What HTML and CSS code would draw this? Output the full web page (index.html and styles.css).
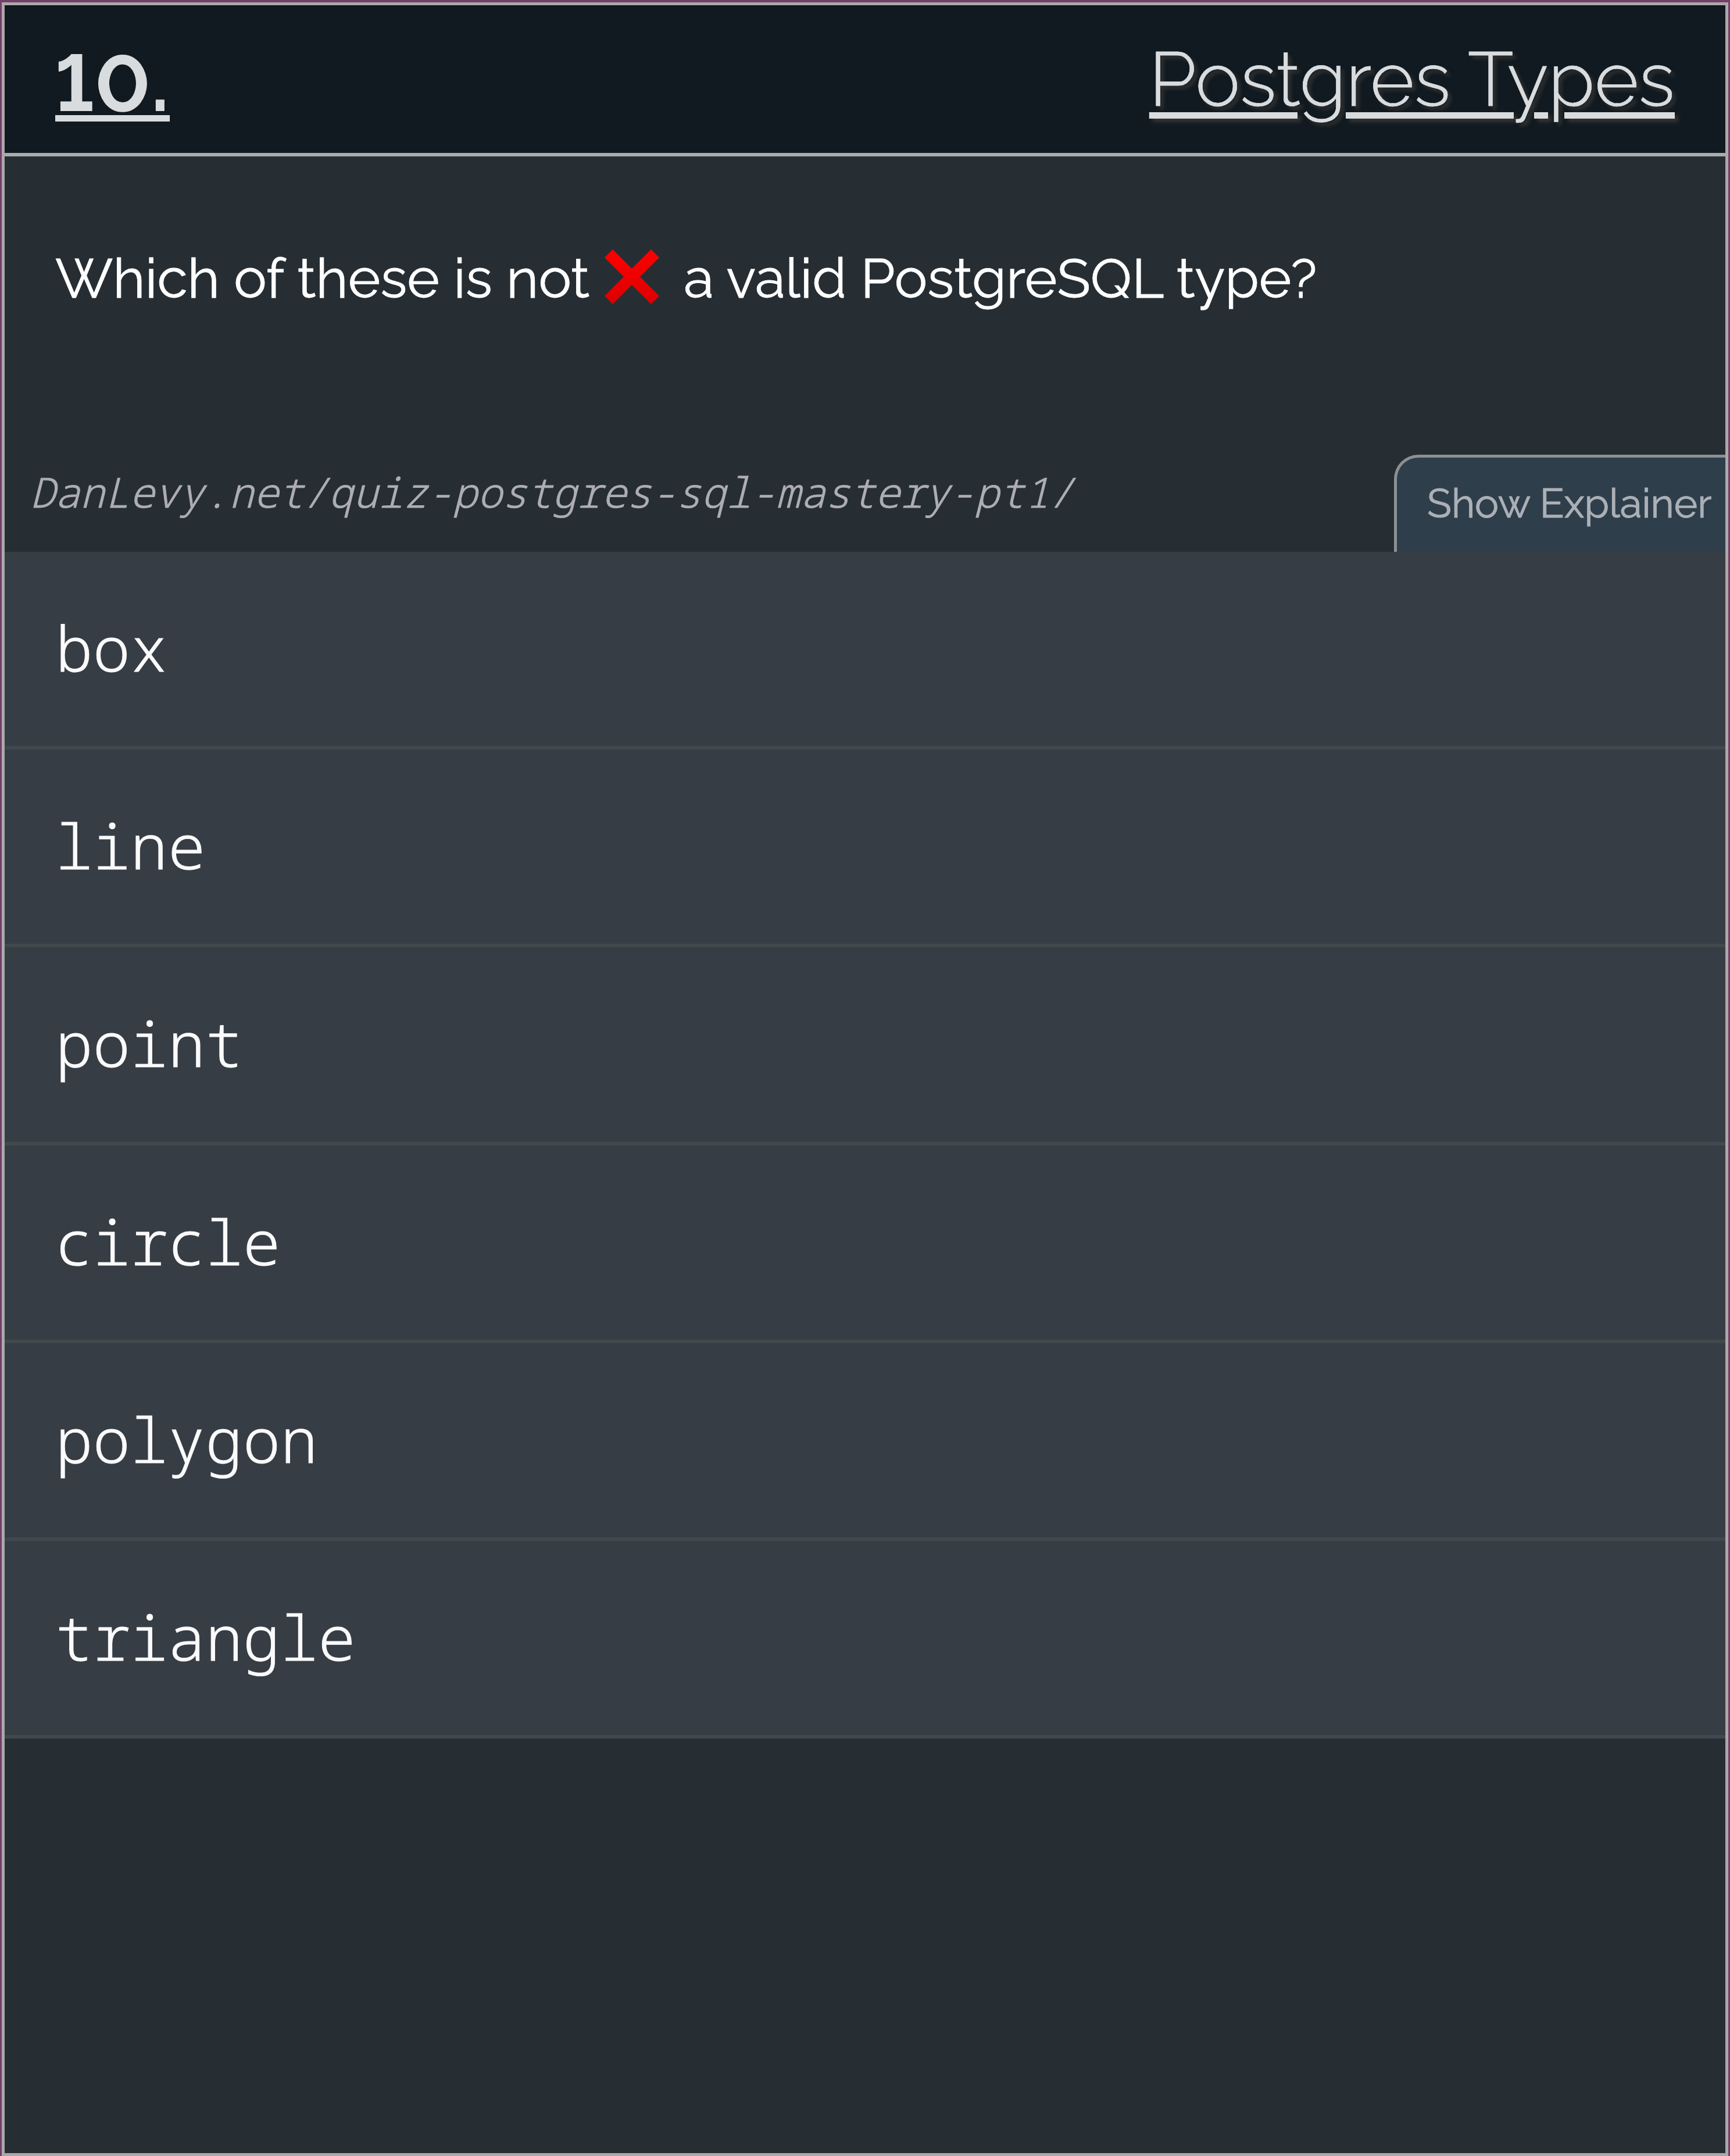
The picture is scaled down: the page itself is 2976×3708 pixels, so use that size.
FILE: index.html
```html
<!DOCTYPE html>
<html lang="en">
<head>
<meta charset="utf-8">
<title>Postgres Types</title>
<link rel="stylesheet" href="styles.css">
</head>
<body>
<main class="quiz">
  <header class="quiz-header">
    <span class="number">10.</span>
    <h1 class="title">Postgres Types</h1>
  </header>
  <section class="prompt">
    <p class="question"><span>Which of these is not</span><svg class="cross" viewBox="0 0 94 94"><defs><linearGradient id="red" x1="0" y1="0" x2="0" y2="1"><stop offset="0" stop-color="#ff0000"/><stop offset="1" stop-color="#dc0000"/></linearGradient></defs><path fill="url(#red)" d="M14 0 47 33 80 0 94 14 61 47 94 80 80 94 47 61 14 94 0 80 33 47 0 14Z"/></svg><span>a valid PostgreSQL type?</span></p>
    <div class="meta">
      <span class="url">DanLevy.net/quiz-postgres-sql-mastery-pt1/</span>
      <button class="explainer">Show Explainer</button>
    </div>
  </section>
  <ul class="options">
    <li>box</li>
    <li>line</li>
    <li>point</li>
    <li>circle</li>
    <li>polygon</li>
    <li>triangle</li>
  </ul>
</main>
</body>
</html>
```
FILE: styles.css
```css
* {
  box-sizing: border-box;
  margin: 0;
  padding: 0;
}

body {
  height: 3708px;
  padding: 4px 3px 0;
  background: #743f68;
  font-family: Raleway, Lato, sans-serif;
}

.quiz {
  display: flex;
  flex-direction: column;
  height: 3704px;
  border: 5px solid #aba8ab;
  background: #262e34;
}

.quiz-header {
  display: flex;
  justify-content: space-between;
  height: 260px;
  padding: 0 87px;
  border-bottom: 6px solid #a9abac;
  background: #111a20;
  color: #d9dcde;
  line-height: 254px;
}

.number,
.title {
  text-decoration: underline;
  text-decoration-thickness: 11px;
}

.number {
  padding-top: 7px;
  font-size: 136px;
  font-weight: 700;
  font-variant-numeric: lining-nums;
  font-kerning: none;
  letter-spacing: 1.5px;
  text-underline-offset: 7px;
}

.title {
  font-size: 130px;
  font-weight: 300;
  text-underline-offset: 11px;
  text-shadow: 6px 6px 6px #333;
  -webkit-text-stroke: 0.5px;
}

.prompt {
  display: flex;
  flex-direction: column;
  justify-content: space-between;
  height: 680px;
}

.question {
  display: flex;
  align-items: center;
  height: 419px;
  padding-left: 87px;
  color: #fff;
  font-size: 95px;
  white-space: nowrap;
  -webkit-text-stroke: 0.8px;
}

.cross {
  width: 94px;
  height: 94px;
  margin: 0 42px 5px 26px;
}

.meta {
  display: flex;
  justify-content: space-between;
  height: 167px;
}

.url {
  padding-left: 44px;
  color: #adadb2;
  font: italic 300 71.25px/128px "Noto Sans Mono", monospace;
  -webkit-text-stroke: 1px;
}

.explainer {
  width: 570px;
  padding: 0 0 4px 52px;
  border: solid #8b9192;
  border-width: 5px 0 0 5px;
  border-radius: 42px 0 0;
  background: #2f3e4b;
  color: #abb0b6;
  font: 400 69px/158px Raleway, Lato, sans-serif;
  text-align: left;
  white-space: nowrap;
  -webkit-text-stroke: 1px;
}

.options {
  list-style: none;
}

.options li {
  height: 340.2px;
  padding-left: 87px;
  border-bottom: 6px solid #41494d;
  background: #363d45;
  color: #fafafb;
  font: 300 107.6px/329px "Noto Sans Mono", monospace;
  -webkit-text-stroke: 1px;
}
```
